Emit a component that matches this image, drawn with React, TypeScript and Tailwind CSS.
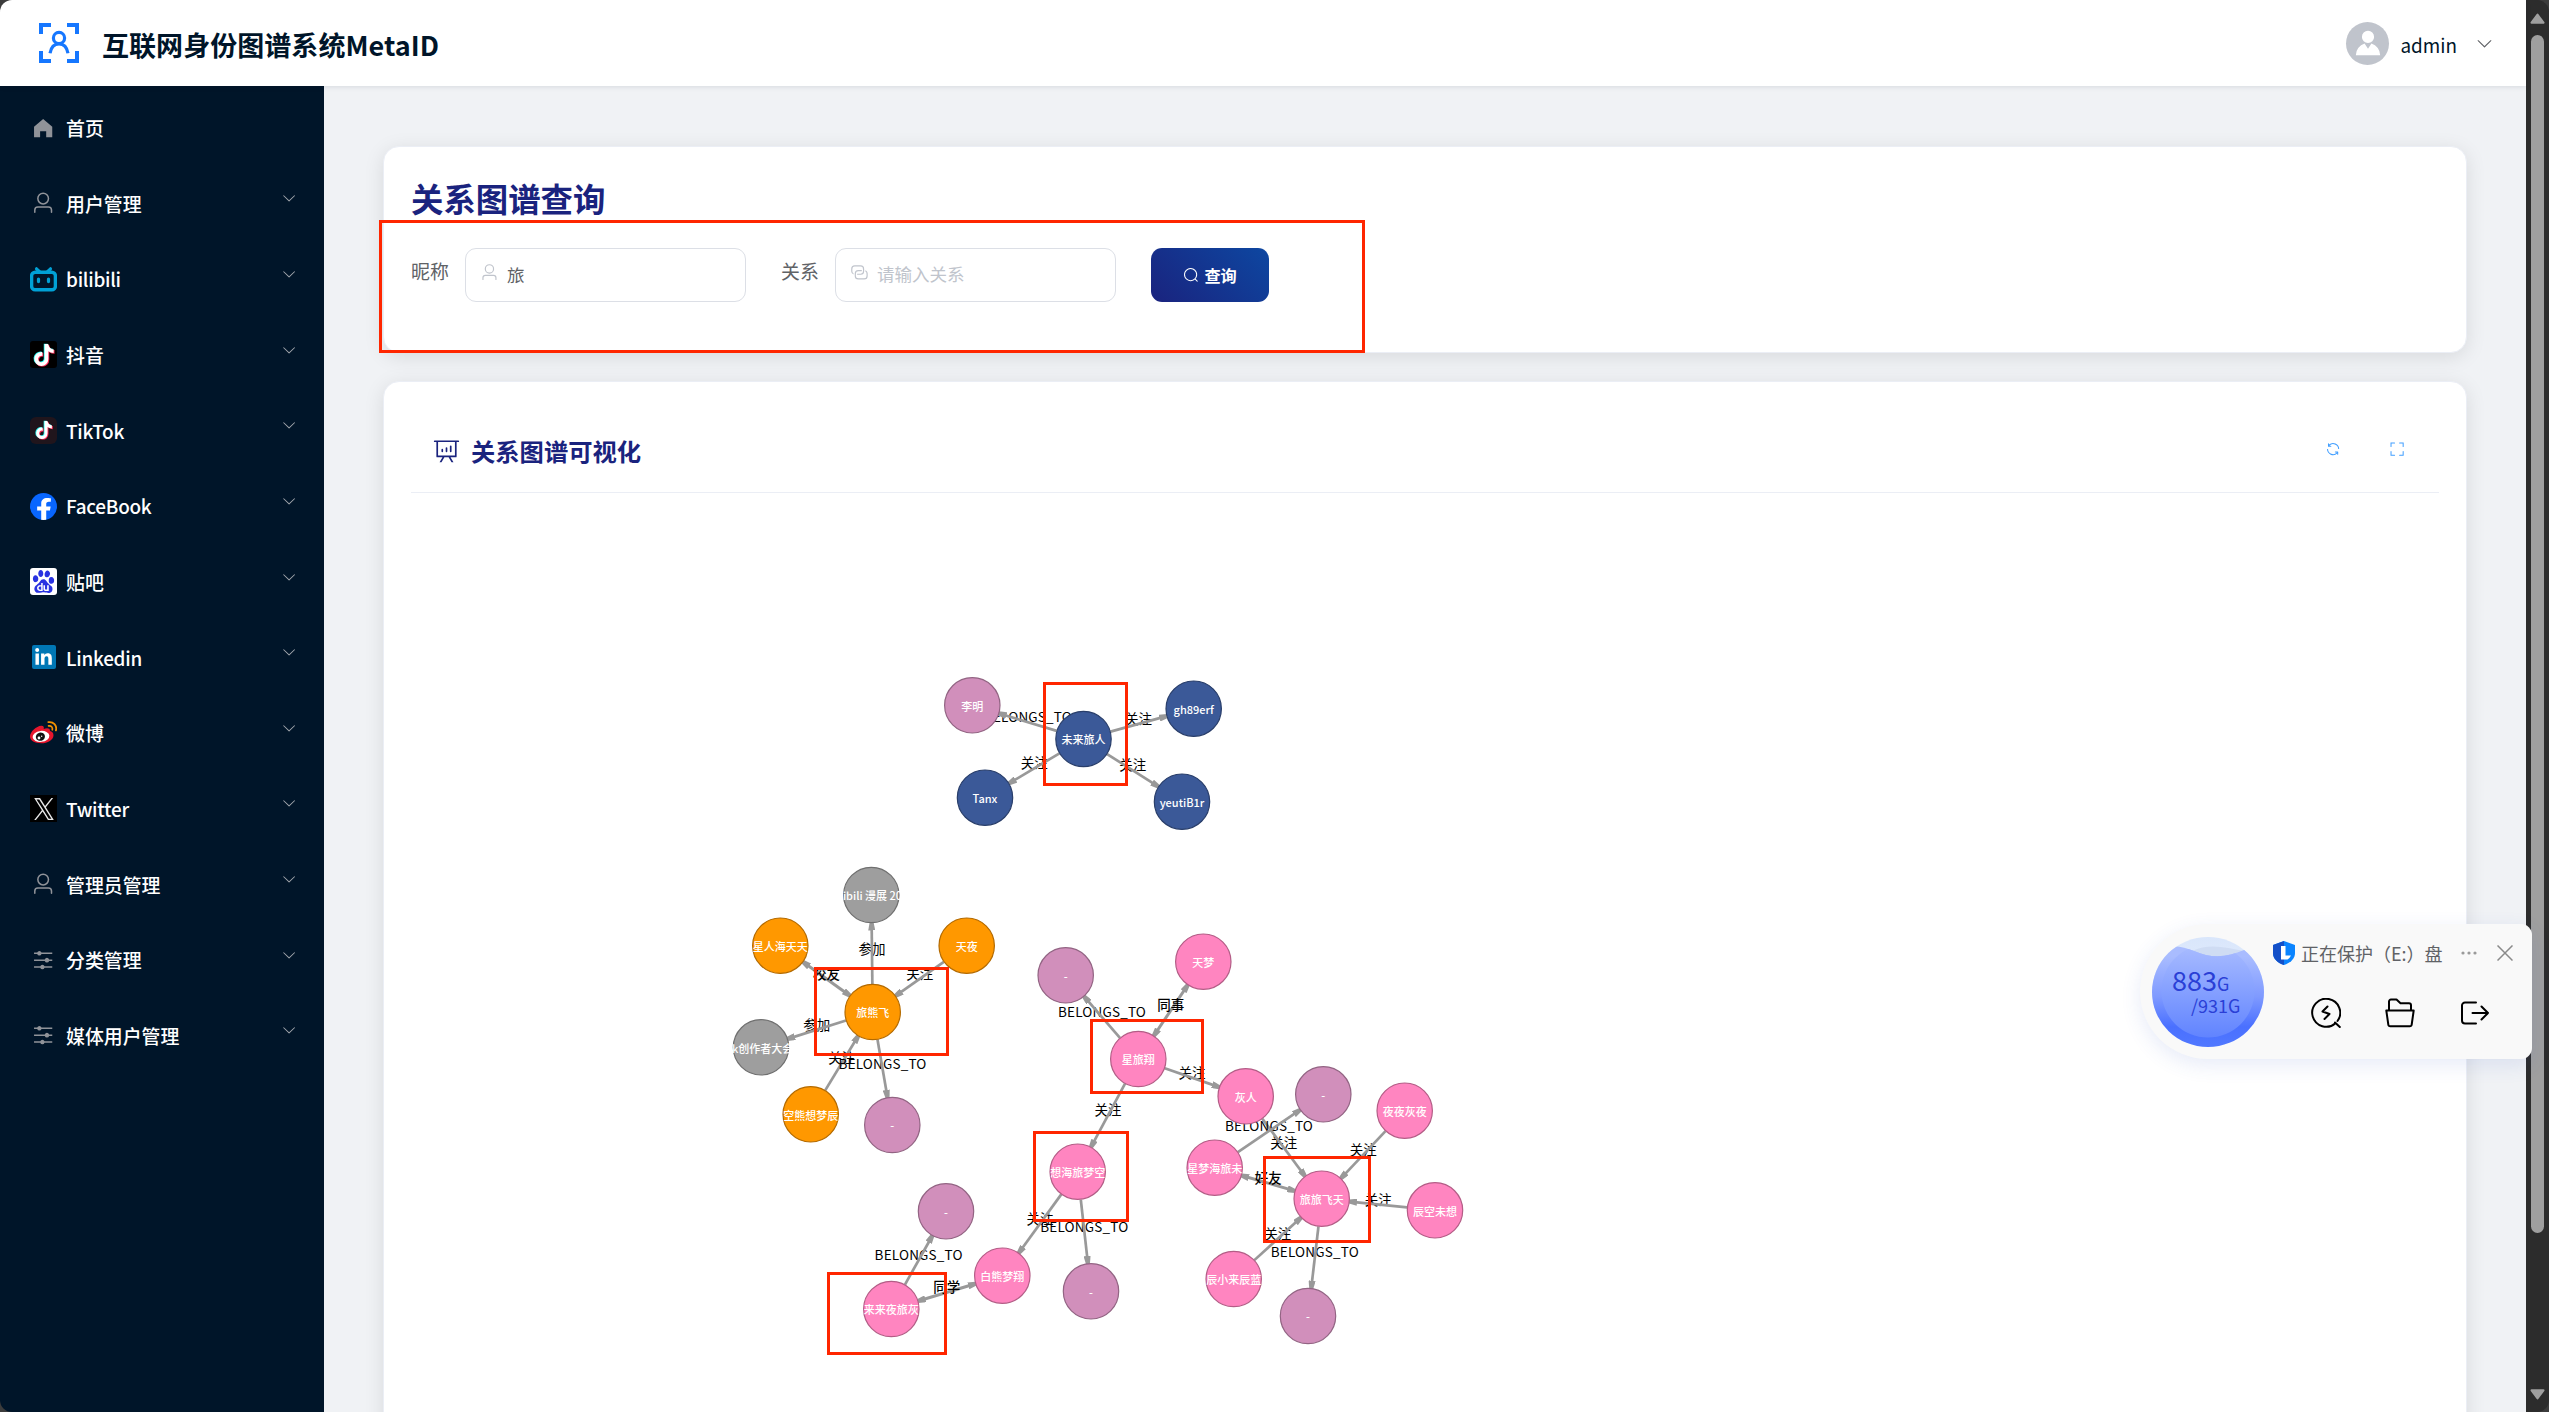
import React from "react";
import { FaTiktok, FaFacebookF, FaLinkedinIn } from "react-icons/fa";
import { SiBaidu } from "react-icons/si";

const ICONS = {
  home: ["M512 128 128 447.936V896h255.936V640H640v256h255.936V447.936z"],
  user: [
    "M512 512a192 192 0 1 0 0-384 192 192 0 0 0 0 384m0 64a256 256 0 1 1 0-512 256 256 0 0 1 0 512m320 320v-96a96 96 0 0 0-96-96H288a96 96 0 0 0-96 96v96a32 32 0 1 1-64 0v-96a160 160 0 0 1 160-160h448a160 160 0 0 1 160 160v96a32 32 0 1 1-64 0",
  ],
  arrowDown: [
    "M831.872 340.864 512 652.672 192.128 340.864a30.592 30.592 0 0 0-42.752 0 29.12 29.12 0 0 0 0 41.6L489.664 714.24a32 32 0 0 0 44.672 0l340.288-331.712a29.12 29.12 0 0 0 0-41.728 30.592 30.592 0 0 0-42.752 0z",
  ],
  operation: [
    "M389.44 768a96.064 96.064 0 0 1 181.12 0H896v64H570.56a96.064 96.064 0 0 1-181.12 0H128v-64zm192-288a96.064 96.064 0 0 1 181.12 0H896v64H762.56a96.064 96.064 0 0 1-181.12 0H128v-64zm-320-288a96.064 96.064 0 0 1 181.12 0H896v64H442.56a96.064 96.064 0 0 1-181.12 0H128v-64z",
  ],
  search: [
    "m795.904 750.72 124.992 124.928a32 32 0 0 1-45.248 45.248L750.656 795.904a416 416 0 1 1 45.248-45.248zM480 832a352 352 0 1 0 0-704 352 352 0 0 0 0 704",
  ],
  connection: [
    "M640 384v64H448a128 128 0 0 0-128 128v128a128 128 0 0 0 128 128h320a128 128 0 0 0 128-128V576a128 128 0 0 0-64-110.848V394.88c74.56 26.368 128 97.472 128 181.056v128a192 192 0 0 1-192 192H448a192 192 0 0 1-192-192V576a192 192 0 0 1 192-192z",
    "M384 640v-64h192a128 128 0 0 0 128-128V320a128 128 0 0 0-128-128H256a128 128 0 0 0-128 128v128a128 128 0 0 0 64 110.848v70.272A192.06 192.06 0 0 1 64 448V320a192 192 0 0 1 192-192h320a192 192 0 0 1 192 192v128a192 192 0 0 1-192 192z",
  ],
  analysis: [
    "m665.216 768 110.848 192h-73.856L591.36 768H433.024L322.176 960H248.32l110.848-192H160a32 32 0 0 1-32-32V192H64a32 32 0 0 1 0-64h896a32 32 0 1 1 0 64h-64v544a32 32 0 0 1-32 32zM832 192H192v512h640zM352 448a32 32 0 0 1 32 32v64a32 32 0 0 1-64 0v-64a32 32 0 0 1 32-32m160-64a32 32 0 0 1 32 32v128a32 32 0 0 1-64 0V416a32 32 0 0 1 32-32m160-64a32 32 0 0 1 32 32v192a32 32 0 1 1-64 0V352a32 32 0 0 1 32-32",
  ],
  refresh: [
    "M771.776 794.88A384 384 0 0 1 128 512h64a320 320 0 0 0 555.712 216.448H654.72a32 32 0 1 1 0-64h149.056a32 32 0 0 1 32 32v148.928a32 32 0 1 1-64 0v-50.56zM276.288 295.616h92.992a32 32 0 0 1 0 64H220.16a32 32 0 0 1-32-32V178.56a32 32 0 0 1 64 0v50.56A384 384 0 0 1 896.128 512h-64a320 320 0 0 0-555.776-216.384z",
  ],
  fullscreen: [
    "m160 96.064 192 .192a32 32 0 0 1 0 64l-192-.192V352a32 32 0 0 1-64 0V96h64zm0 831.872V928H96V672a32 32 0 1 1 64 0v191.936l192-.192a32 32 0 1 1 0 64zM864 96.064V96h64v256a32 32 0 1 1-64 0V160.064l-192 .192a32 32 0 1 1 0-64l192-.192zm0 831.872-192-.192a32 32 0 0 1 0-64l192 .192V672a32 32 0 1 1 64 0v256h-64z",
  ],
  avatar: [
    "M628.736 528.896A416 416 0 0 1 928 928H96a415.872 415.872 0 0 1 299.264-399.104L512 704zM720 304a208 208 0 1 1-416 0 208 208 0 0 1 416 0",
  ],
};

function Icon({ name, className }: { name: keyof typeof ICONS; className: string }) {
  return (
    <svg viewBox="0 0 1024 1024" fill="currentColor" className={`shrink-0 ${className}`}>
      {ICONS[name].map((d) => (
        <path key={d} d={d} />
      ))}
    </svg>
  );
}

function BilibiliLogo() {
  return (
    <svg viewBox="0 0 27 27" className="size-[27px]" fill="none" stroke="#00a1d6" strokeLinecap="round">
      <path d="M6.500 2.800 9.500 5.600M20.500 2.800 17.500 5.600" strokeWidth="3.200" />
      <rect x="1.600" y="6.200" width="23.800" height="17.600" rx="3.600" strokeWidth="3.400" />
      <path d="M8.500 13v2.600M18.500 13v2.600" strokeWidth="3.200" />
    </svg>
  );
}

function NoteLogo({ small }: { small?: boolean }) {
  const size = small ? "size-[18px]" : "size-[22px]";
  return (
    <span
      className={`relative flex size-[27px] items-center justify-center ${small ? "rounded-[6px] bg-[#20151c]" : "rounded-[3px] bg-black"}`}
    >
      <FaTiktok className={`absolute -translate-x-[0.8px] -translate-y-[0.6px] text-[#25f4ee] ${size}`} />
      <FaTiktok className={`absolute translate-x-[0.9px] translate-y-[0.8px] text-[#fe2c55] ${size}`} />
      <FaTiktok className={`absolute text-white ${size}`} />
    </span>
  );
}

function WeiboLogo() {
  return (
    <svg viewBox="0 0 27 27" className="size-[27px]">
      <path
        d="M0 17.6C0 12.600 6.500 7 11.200 6.700c2.600-.1 3 1.500 2.500 3.300 2.600-1.100 6.600-1.300 6.300 2 1.800.6 3.500 1.600 3.500 4.200 0 4.600-5.800 8.100-12.300 8.100C5 24.300 0 21.900 0 17.600z"
        fill="#e6162d"
      />
      <ellipse cx="11" cy="17.400" rx="8.400" ry="5.500" fill="#fff" transform="rotate(-6 11 17.400)" />
      <ellipse cx="10.400" cy="17.700" rx="4.600" ry="4.100" fill="#111" transform="rotate(-15 10.400 17.700)" />
      <circle cx="9" cy="19" r="1.400" fill="#fff" />
      <circle cx="11.700" cy="17.300" r=".7" fill="#fff" />
      <path d="M18.300 3.200c5-.9 9 3.400 7.600 8.200" stroke="#f29100" strokeWidth="1.800" fill="none" strokeLinecap="round" />
      <path d="M18.600 6.900c2.700-.4 4.300 1.500 3.700 3.900" stroke="#f29100" strokeWidth="1.700" fill="none" strokeLinecap="round" />
    </svg>
  );
}

function XLogo() {
  return (
    <span className="flex size-[27px] items-center justify-center bg-black">
      <svg viewBox="0 0 24 24" className="h-[22px] w-[20px]" preserveAspectRatio="none" fill="#e8e8e8">
        <path d="M14.230 10.160 22.980 0h-2.070l-7.600 8.820L7.250 0H.25l9.170 13.340L.25 24h2.070l8.020-9.320L16.750 24h7zm-2.840 3.300-.93-1.330L3.070 1.560h3.180l5.970 8.540.93 1.330 7.760 11.100h-3.180z" />
      </svg>
    </span>
  );
}

const menu: { label: string; icon: React.ReactNode; leaf?: boolean }[] = [
  { label: "首页", icon: <Icon name="home" className="size-[24.3px] text-[#909399]" />, leaf: true },
  { label: "用户管理", icon: <Icon name="user" className="size-[24.3px] text-[#909399]" /> },
  { label: "bilibili", icon: <BilibiliLogo /> },
  { label: "抖音", icon: <NoteLogo /> },
  { label: "TikTok", icon: <NoteLogo small /> },
  {
    label: "FaceBook",
    icon: (
      <span className="flex size-[27px] items-end justify-center overflow-hidden rounded-full bg-[#0866ff]">
        <FaFacebookF className="h-[22px] w-[16px] text-white" preserveAspectRatio="none" />
      </span>
    ),
  },
  {
    label: "贴吧",
    icon: (
      <span className="flex size-[27px] items-center justify-center rounded-[3px] bg-white">
        <SiBaidu className="size-[23px] text-[#2932e1]" />
      </span>
    ),
  },
  {
    label: "Linkedin",
    icon: (
      <span className="flex size-[24px] items-center justify-center rounded-[2px] bg-[#0077b5]">
        <FaLinkedinIn className="size-[19px] text-white" />
      </span>
    ),
  },
  { label: "微博", icon: <WeiboLogo /> },
  { label: "Twitter", icon: <XLogo /> },
  { label: "管理员管理", icon: <Icon name="user" className="size-[24.3px] text-[#909399]" /> },
  { label: "分类管理", icon: <Icon name="operation" className="size-[24.3px] text-[#909399]" /> },
  { label: "媒体用户管理", icon: <Icon name="operation" className="size-[24.3px] text-[#909399]" /> },
];

const C = { blue: "#3b5998", mauve: "#d18fbb", orange: "#ff9800", gray: "#9e9e9e", pink: "#ff85c0" };
const STROKE: Record<string, string> = {
  [C.blue]: "#293e6a",
  [C.mauve]: "#926483",
  [C.orange]: "#b36a00",
  [C.gray]: "#6f6f6f",
  [C.pink]: "#b35d86",
};

/* id: [x, y, fill, label, label offset] */
const nodes: Record<string, [number, number, string, string, number?]> = {
  liming: [972.3, 705.3, C.mauve, "李明"],
  weilai: [1083.5, 739, C.blue, "未来旅人"],
  gh: [1193.7, 708.7, C.blue, "gh89erf"],
  tanx: [985, 797.7, C.blue, "Tanx"],
  yeuti: [1182, 801.7, C.blue, "yeutiB1r"],
  manzhan: [871.3, 895, C.gray, "bilibili 漫展 2024", 0.8],
  xingren: [780.3, 945.7, C.orange, "星人海天天"],
  tianye: [966.7, 945.7, C.orange, "天夜"],
  lvxiong: [872.7, 1012, C.orange, "旅熊飞"],
  dahui: [761, 1047.3, C.gray, "k创作者大会", 1.7],
  kongxiong: [810.7, 1114.3, C.orange, "空熊想梦辰"],
  b1: [892.3, 1125, C.mauve, "-"],
  b2: [1065.7, 975.3, C.mauve, "-"],
  tianmeng: [1203.3, 961.7, C.pink, "天梦"],
  xinglv: [1138.3, 1059, C.pink, "星旅翔"],
  huiren: [1245.7, 1096.3, C.pink, "灰人"],
  b3: [1323.3, 1094.3, C.mauve, "-"],
  yeye: [1404.7, 1110.7, C.pink, "夜夜灰夜"],
  xianghai: [1077.7, 1171.7, C.pink, "想海旅梦空"],
  xingmeng: [1214.7, 1167.7, C.pink, "星梦海旅未"],
  lvlv: [1321.7, 1198.7, C.pink, "旅旅飞天"],
  chenkong: [1435, 1210.3, C.pink, "辰空未想"],
  chenxiao: [1233.7, 1279, C.pink, "辰小来辰蓝"],
  b4: [1308, 1316, C.mauve, "-"],
  b5: [1091, 1291.3, C.mauve, "-"],
  b6: [946, 1211.3, C.mauve, "-"],
  lailai: [891.3, 1309, C.pink, "来来夜旅灰"],
  baixiong: [1002.3, 1275.7, C.pink, "白熊梦翔"],
};

/* [from, to, label, mutual] */
const edges: [string, string, string, boolean?][] = [
  ["weilai", "liming", "BELONGS_TO"],
  ["weilai", "gh", "关注"],
  ["weilai", "tanx", "关注"],
  ["weilai", "yeuti", "关注"],
  ["lvxiong", "manzhan", "参加"],
  ["lvxiong", "xingren", "校友", true],
  ["tianye", "lvxiong", "关注"],
  ["lvxiong", "dahui", "参加"],
  ["kongxiong", "lvxiong", "关注"],
  ["lvxiong", "b1", "BELONGS_TO"],
  ["xinglv", "b2", "BELONGS_TO"],
  ["xinglv", "tianmeng", "同事", true],
  ["xinglv", "huiren", "关注"],
  ["xinglv", "xianghai", "关注"],
  ["huiren", "lvlv", "关注"],
  ["xingmeng", "b3", "BELONGS_TO"],
  ["yeye", "lvlv", "关注"],
  ["xingmeng", "lvlv", "好友", true],
  ["chenkong", "lvlv", "关注"],
  ["chenxiao", "lvlv", "关注"],
  ["lvlv", "b4", "BELONGS_TO"],
  ["xianghai", "b5", "BELONGS_TO"],
  ["xianghai", "baixiong", "关注"],
  ["lailai", "b6", "BELONGS_TO"],
  ["lailai", "baixiong", "同学", true],
];

/* Canvas origin of the graph inside the page. */
const OX = 411;
const OY = 493;

function Graph() {
  return (
    <svg
      width="2028"
      height="919"
      viewBox={`${OX} ${OY} 2028 919`}
      className="block shrink-0"
      style={{ fontFamily: '"Noto Sans CJK SC", sans-serif' }}
    >
      <defs>
        <marker
          id="arrow"
          viewBox="0 0 8 7"
          refX="7.500"
          refY="3.500"
          markerWidth="8"
          markerHeight="7"
          markerUnits="userSpaceOnUse"
          orient="auto-start-reverse"
        >
          <path d="M0 0 8 1.500v4L0 7z" fill="#999" />
        </marker>
        {Object.entries(nodes).map(([id, [x, y]]) => (
          <clipPath key={id} id={`clip-${id}`}>
            <rect x={x - 29} y={y - 29} width="58" height="58" />
          </clipPath>
        ))}
      </defs>
      {edges.map(([a, b, label, mutual]) => {
        const [x1, y1] = nodes[a];
        const [x2, y2] = nodes[b];
        const d = Math.hypot(x2 - x1, y2 - y1);
        const ux = ((x2 - x1) / d) * 28;
        const uy = ((y2 - y1) / d) * 28;
        const text = (
          <text
            x={(x1 + x2) / 2}
            y={(y1 + y2) / 2}
            fontSize="13.500"
            fontWeight={mutual ? 500 : 400}
            textAnchor="middle"
            fill="#000"
            letterSpacing={label === "BELONGS_TO" ? 0.2 : 0}
          >
            {label}
          </text>
        );
        return (
          <g key={a + b}>
            {!mutual && text}
            <line
              x1={x1 + ux}
              y1={y1 + uy}
              x2={x2 - ux}
              y2={y2 - uy}
              stroke="#999"
              strokeWidth={mutual ? 3 : 2.7}
              markerStart={mutual ? "url(#arrow)" : undefined}
              markerEnd="url(#arrow)"
            />
            {mutual && text}
          </g>
        );
      })}
      {Object.entries(nodes).map(([id, [x, y, fill, label, dx = 0]]) => (
        <g key={id}>
          <circle cx={x} cy={y} r="27.700" fill={fill} stroke={STROKE[fill]} strokeWidth="1.200" />
          <text x={x + dx} y={y + 5.3} fontSize="11" fontWeight="500" textAnchor="middle" fill="#fff" clipPath={`url(#clip-${id})`}>
            {label}
          </text>
        </g>
      ))}
    </svg>
  );
}

/* Highlight frames drawn over the page. */
const frames = [
  "left-[379px] top-[220px] w-[986px] h-[133px]",
  "left-[1043px] top-[682px] w-[85px] h-[104px]",
  "left-[814px] top-[967px] w-[135px] h-[89px]",
  "left-[1090px] top-[1019px] w-[114px] h-[75px]",
  "left-[1033px] top-[1131px] w-[96px] h-[91px]",
  "left-[1263px] top-[1156px] w-[108px] h-[87px]",
  "left-[827px] top-[1272px] w-[120px] h-[83px]",
];

function Header() {
  return (
    <header className="relative z-10 flex h-[86px] shrink-0 items-center bg-white pl-[39px] pr-[32px] shadow-[0_1px_5px_rgba(0,21,41,0.1)]">
      <svg viewBox="0 0 40 40" className="size-10" fill="none" stroke="#1677ff" strokeWidth="4">
        <path d="M2 11V2h10M28 2h10v9M38 28v10H28M12 38H2V28" />
        <circle cx="20" cy="15" r="5.600" strokeWidth="3.200" />
        <path d="M11 30.300C12 24.500 15 20.800 20 20.800s8 3.700 9 9.500" strokeWidth="3.200" />
      </svg>
      <h1 className="ml-[23px] mt-[3px] flex-1 text-[27px] font-bold leading-10 tracking-[0.05px] text-[#001529]">互联网身份图谱系统MetaID</h1>
      <span className="flex size-[43px] items-center justify-center rounded-full bg-[#c0c4cc] text-white">
        <Icon name="avatar" className="size-[30px]" />
      </span>
      <span className="ml-[11px] mt-[3px] text-[18.900px] leading-7 text-[#001529]">admin</span>
      <Icon name="arrowDown" className="ml-[18px] size-[19px] text-[#606266]" />
    </header>
  );
}

function Sidebar() {
  return (
    <nav className="flex w-[324px] shrink-0 flex-col bg-[#001529] pt-[4px]">
      {menu.map((m) => (
        <div key={m.label} className="flex h-[75.650px] shrink-0 items-center pl-[30px] pr-[27px]">
          <span className="flex w-[27px] justify-center">{m.icon}</span>
          <span
            className={`ml-[9px] flex-1 pt-px text-[18.900px] font-medium text-white ${/^[A-Za-z]+$/.test(m.label) ? "tracking-[-0.25px]" : ""}`}
          >
            {m.label}
          </span>
          {!m.leaf && <Icon name="arrowDown" className="mb-[10px] size-[16.200px] text-[#a3a8ae]" />}
        </div>
      ))}
    </nav>
  );
}

function QueryCard() {
  return (
    <section className="flex h-[207px] shrink-0 flex-col rounded-2xl border border-[#ebeef5] bg-white px-[27px] pt-[27px] shadow-[0_4px_20px_rgba(0,0,0,0.1)]">
      <h2 className="text-[32.400px] font-bold leading-[48px] text-[#1a237e]">关系图谱查询</h2>
      <div className="mt-[26px] flex items-start text-[17.550px]">
        <label className="w-[54px] pt-[9px] text-[18.900px] leading-7 text-[#606266]">昵称</label>
        <div className="flex h-[54px] w-[281px] items-start rounded-[11px] border border-[#dcdfe6] pl-[14px] pt-[14px]">
          <Icon name="user" className="size-[18.900px] text-[#c0c4cc]" />
          <span className="ml-[8px] leading-6 text-[#606266]">旅</span>
        </div>
        <label className="ml-[35px] w-[54px] pt-[9px] text-[18.900px] leading-7 text-[#606266]">关系</label>
        <div className="flex h-[54px] w-[281px] items-start rounded-[11px] border border-[#dcdfe6] pl-[14px] pt-[14px]">
          <Icon name="connection" className="size-[18.900px] text-[#c0c4cc]" />
          <span className="-mt-px ml-[8px] leading-6 text-[#c0c4cc]">请输入关系</span>
        </div>
        <button className="ml-[35px] flex h-[54px] w-[118px] items-center justify-center gap-[5px] rounded-[11px] bg-linear-[45deg,#1a237e,#0d47a1] text-[16.200px] font-bold text-white">
          <Icon name="search" className="size-[16.200px]" />
          查询
        </button>
      </div>
    </section>
  );
}

function GraphCard() {
  return (
    <section className="flex h-[1080px] shrink-0 flex-col rounded-2xl border border-[#ebeef5] bg-white px-[27px] shadow-[0_4px_20px_rgba(0,0,0,0.1)]">
      <div className="flex h-[111px] shrink-0 items-center border-b border-[#ebeef5] pl-[22px] pr-[34px] pt-[27px]">
        <Icon name="analysis" className="size-[27px] text-[#1a237e]" />
        <h3 className="ml-[11px] flex-1 text-[24.300px] font-bold leading-9 text-[#1a237e]">关系图谱可视化</h3>
        <Icon name="refresh" className="mb-[2px] size-[16.200px] text-[#409eff]" />
        <Icon name="fullscreen" className="mb-[2px] ml-[48px] size-[16.200px] text-[#409eff]" />
      </div>
      <Graph />
    </section>
  );
}

function Scrollbar() {
  return (
    <div className="flex w-[23px] shrink-0 flex-col items-center bg-[#2c2c2c]">
      <svg viewBox="0 0 15 11" className="mt-[13px] h-[11px] w-[15px] shrink-0" fill="#9f9f9f" stroke="#9f9f9f" strokeWidth="2" strokeLinejoin="round">
        <path d="M7.500 1.500 13.500 9.700h-12z" />
      </svg>
      <div className="mt-[11px] h-[1198px] w-[13px] shrink-0 rounded-full bg-[#9f9f9f]" />
      <svg viewBox="0 0 15 11" className="mt-auto mb-3 h-[11px] w-[15px] shrink-0" fill="#9f9f9f" stroke="#9f9f9f" strokeWidth="2" strokeLinejoin="round">
        <path d="M7.500 9.500 13.500 1.300h-12z" />
      </svg>
    </div>
  );
}

function DiskWidget() {
  return (
    <aside className="absolute left-[2140px] top-[924px] flex h-[135px] w-[392px] rounded-l-[68px] rounded-r-[11px] bg-[#f9f9f9] shadow-[0_6px_20px_rgba(60,90,200,0.12)]">
      <div className="relative ml-3 mt-[13px] h-[110px] w-[112px]">
        <svg viewBox="0 0 112 110" className="h-[110px] w-[112px]">
          <defs>
            <linearGradient id="water" x1="0" y1="0" x2="0" y2="1">
              <stop offset="0.1" stopColor="#a9bcff" />
              <stop offset="0.500" stopColor="#7f9aff" />
              <stop offset="0.800" stopColor="#4a70ff" />
              <stop offset="1" stopColor="#5078ff" />
            </linearGradient>
            <linearGradient id="inner" x1="0" y1="0" x2="0" y2="1">
              <stop offset="0" stopColor="#a9bcff" />
              <stop offset="1" stopColor="#6184ff" />
            </linearGradient>
            <linearGradient id="air" x1="0" y1="0" x2="0" y2="1">
              <stop offset="0" stopColor="#d9e6fb" />
              <stop offset="1" stopColor="#f4f8ff" />
            </linearGradient>
            <clipPath id="ball">
              <ellipse cx="56" cy="55" rx="56" ry="55" />
            </clipPath>
            <clipPath id="waterline">
              <path d="M0 22C14 4 28 9 42 14 60 22 76 20 92 13L112 10V110H0z" />
            </clipPath>
          </defs>
          <g clipPath="url(#ball)">
            <rect width="112" height="110" fill="url(#air)" />
            <path d="M40 14C56 6 74 10 92 14L90 26H50z" fill="#cfdcf3" />
            <path d="M0 22C14 4 28 9 42 14 60 22 76 20 92 13L112 10V110H0z" fill="url(#water)" />
            <circle cx="56" cy="54" r="46.500" fill="url(#inner)" clipPath="url(#waterline)" />
          </g>
        </svg>
        <div className="absolute left-[20px] top-[27px] whitespace-nowrap text-[27px] leading-8 text-[#2a3fd6]">
          883<span className="text-[18px]">G</span>
        </div>
        <div className="absolute left-[39px] top-[56px] text-[18px] leading-6 text-[#2a3fd6]">/931G</div>
      </div>
      <div className="ml-[9px] flex flex-1 flex-col pt-[15px]">
        <div className="flex h-7 items-center">
          <svg viewBox="0 0 22 24" className="h-6 w-[22px]">
            <path d="M11 0 22 4v8c0 6-5 10-11 12C5 22 0 18 0 12V4z" fill="#0a84ff" />
            <path d="M11 0v24C5 22 0 18 0 12V4z" fill="#1450c8" />
            <path d="M8 5h4.500v9.500H18a9 9 0 0 1-3.500 4H8z" fill="#fff" />
          </svg>
          <span className="ml-[6px] flex-1 whitespace-nowrap text-[18px] text-[#606266]">正在保护（E:）盘</span>
          <svg viewBox="0 0 16 4" className="h-1 w-4" fill="#9a9a9a">
            <circle cx="2" cy="2" r="1.600" />
            <circle cx="8" cy="2" r="1.600" />
            <circle cx="14" cy="2" r="1.600" />
          </svg>
          <svg viewBox="0 0 16 16" className="ml-5 mr-[19px] size-4" stroke="#8a8a8a" strokeWidth="1.500">
            <path d="M.5.5l15 15M15.500.5l-15 15" />
          </svg>
        </div>
        <div className="mt-[31px] flex items-center pl-[38px] text-black">
          <svg viewBox="0 0 30 30" className="size-[30px]" fill="none" stroke="currentColor" strokeWidth="2" strokeLinecap="round" strokeLinejoin="round">
            <path d="M24.500 25.200A14 14 0 1 1 26.500 23M24 24.500l4.800 4.500" />
            <path d="M16.500 8.500 11.500 13.500l7 2.500-5 5" />
          </svg>
          <svg viewBox="0 0 30 30" className="ml-[44px] size-[30px]" fill="none" stroke="currentColor" strokeWidth="2" strokeLinecap="round" strokeLinejoin="round">
            <path d="M1.300 12.500h27.400l-2 14a2 2 0 0 1-2 1.800H5.300a2 2 0 0 1-2-1.800z" />
            <path d="M4 12V3.500a2 2 0 0 1 2-2h5.500l4 3.800H24a2 2 0 0 1 2 2V12" />
          </svg>
          <svg viewBox="0 0 30 30" className="ml-[45px] size-[30px]" fill="none" stroke="currentColor" strokeWidth="2" strokeLinecap="round" strokeLinejoin="round">
            <path d="M16 4.500H5a3 3 0 0 0-3 3v15a3 3 0 0 0 3 3h11" />
            <path d="M12.500 15H28M21.500 8.500 28 15l-6.500 6.500" />
          </svg>
        </div>
      </div>
    </aside>
  );
}

export default function App() {
  return (
    <div className="h-[1412px] w-[2549px] bg-[#3c3c3c]" style={{ fontFamily: '"Noto Sans CJK SC", sans-serif' }}>
      <div className="relative flex h-full overflow-hidden rounded-[12px]">
        <div className="flex min-w-0 flex-1 flex-col">
          <Header />
          <div className="flex min-h-0 flex-1">
            <Sidebar />
            <main className="flex min-w-0 flex-1 flex-col gap-[28px] overflow-hidden bg-[#f0f2f5] pl-[59px] pr-[59px] pt-[60px]">
              <QueryCard />
              <GraphCard />
            </main>
          </div>
        </div>
        <Scrollbar />
        {frames.map((f) => (
          <div key={f} className={`absolute border-[3px] border-[#ff2600] ${f}`} />
        ))}
        <DiskWidget />
      </div>
    </div>
  );
}
